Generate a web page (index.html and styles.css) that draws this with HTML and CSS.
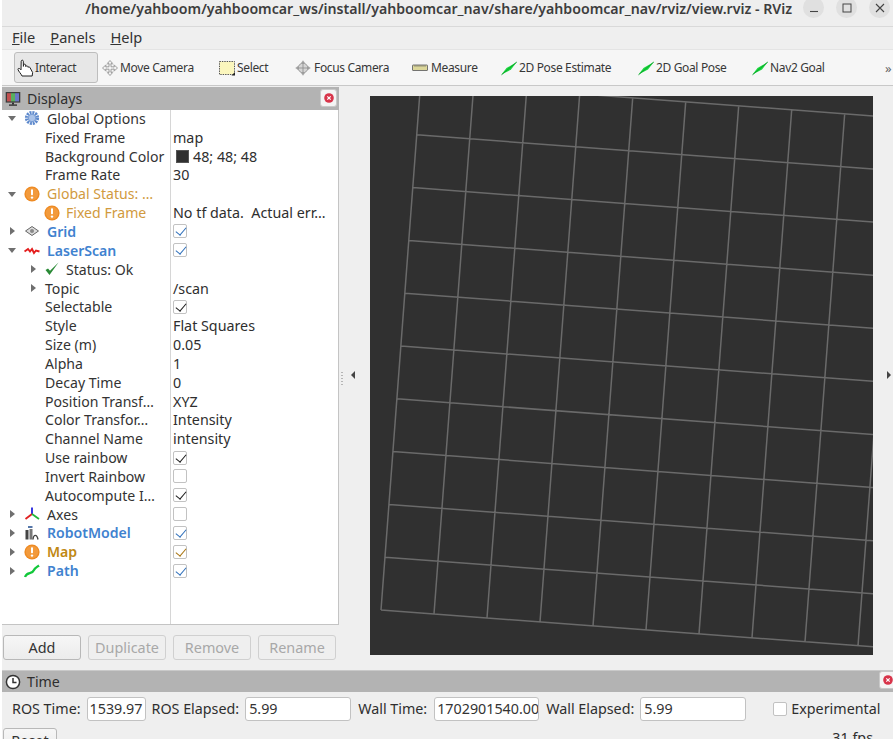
FILE: index.html
```html
<!DOCTYPE html>
<html lang="en">
<head>
<meta charset="utf-8">
<title>RViz</title>
<link rel="stylesheet" href="styles.css">
</head>
<body>
<svg class="defs" width="0" height="0" aria-hidden="true">
  <symbol id="warn" viewBox="0 0 16 16"><circle cx="8" cy="8" r="7.6" fill="#ee8a22"/><circle cx="8" cy="8" r="6.2" fill="#f29a3c"/><rect x="7" y="3.2" width="2" height="6" rx=".8" fill="#fff"/><circle cx="8" cy="11.6" r="1.2" fill="#fff"/></symbol>
  <symbol id="goal" viewBox="0 0 16 16"><path d="M.5 14.6 L5.5 8 L15.8 2 L10 9.6 Z" fill="#17d83c"/><path d="M.5 14.8 L15.8 2" stroke="#0e9f2c" stroke-width=".9"/></symbol>
</svg>
<div class="window">
  <header class="titlebar">
    <div class="title">/home/yahboom/yahboomcar_ws/install/yahboomcar_nav/share/yahboomcar_nav/rviz/view.rviz - RViz</div>
    <div class="winbtns">
      <span class="winbtn"><svg width="10" height="10" viewBox="0 0 10 10"><path d="M1 8.5H9" stroke="#444" stroke-width="1.1"/></svg></span>
      <span class="winbtn"><svg width="10" height="10" viewBox="0 0 10 10"><rect x="1" y="1" width="8" height="8" fill="none" stroke="#444" stroke-width="1"/></svg></span>
      <span class="winbtn"><svg width="10" height="10" viewBox="0 0 10 10"><path d="M1 1L9 9M9 1L1 9" stroke="#444" stroke-width="1.1"/></svg></span>
    </div>
  </header>
  <nav class="menubar">
    <span class="menu"><u>F</u>ile</span>
    <span class="menu"><u>P</u>anels</span>
    <span class="menu"><u>H</u>elp</span>
  </nav>
  <div class="toolbar">
    <span class="grip"></span>
    <div class="tool active">
      <svg class="ticon hand" viewBox="0 0 17 18"><path d="M5 17 C4 14.5 1.5 12.5 1 10.5 C.8 9 2.6 9 4 10.8 L4.2 2.2 C4.4 .8 6.1 .8 6.3 2.2 L6.4 7.4 L6.6 5.8 C7 4.9 8.2 4.9 8.6 5.8 L8.8 7.6 C9.2 6.5 10.4 6.5 10.8 7.6 L11 8.4 C11.5 7.6 12.8 7.8 13.1 8.8 L15.6 13.5 L15.2 17" fill="#fff" stroke="#222" stroke-width="1"/><path d="M5 17H15.2" stroke="#222" stroke-width="1"/></svg>
      <span>Interact</span>
    </div>
    <div class="tool move">
      <svg class="ticon" viewBox="0 0 16 16"><path d="M8 .5 L10.6 3.4 H9 V6.8 H12.4 V5.2 L15.5 8 L12.4 10.8 V9.2 H9 V12.6 H10.6 L8 15.5 L5.4 12.6 H7 V9.2 H3.6 V10.8 L.5 8 L3.6 5.2 V6.8 H7 V3.4 H5.4 Z" fill="#f3f3f3" stroke="#8a8a8a" stroke-width=".8"/><path d="M4.5 4.5h7v7h-7z" fill="none" stroke="#aaa" stroke-width=".7" stroke-dasharray="1 1"/></svg>
      <span>Move Camera</span>
    </div>
    <div class="tool select">
      <svg class="ticon" viewBox="0 0 16 16"><rect x=".5" y="1.5" width="15" height="13" fill="#fbf6bd" stroke="#555" stroke-width="1" stroke-dasharray="1.4 1"/><path d="M12.5 15.5h3.5v-3.5z" fill="#222"/></svg>
      <span>Select</span>
    </div>
    <div class="tool focus">
      <svg class="ticon" viewBox="0 0 16 16"><path d="M8 .2 L10 3 H6 Z M8 15.8 L10 13 H6 Z M.2 8 L3 6 V10 Z M15.8 8 L13 6 V10 Z" fill="#aaa"/><circle cx="8" cy="8" r="4.8" fill="#d5d5d5" stroke="#888" stroke-width=".8"/><path d="M8 2.5V13.5M2.5 8H13.5" stroke="#8a8a8a" stroke-width=".8"/></svg>
      <span>Focus Camera</span>
    </div>
    <div class="tool measure">
      <svg class="ticon" viewBox="0 0 16 16"><rect x=".5" y="5" width="15" height="5.5" rx=".5" fill="#dcd79a" stroke="#666" stroke-width=".9"/><path d="M3 5V7M5 5V7M7 5V7M9 5V7M11 5V7M13 5V7" stroke="#666" stroke-width=".6"/></svg>
      <span>Measure</span>
    </div>
    <div class="tool pose">
      <svg class="ticon"><use href="#goal"/></svg>
      <span>2D Pose Estimate</span>
    </div>
    <div class="tool gpose">
      <svg class="ticon"><use href="#goal"/></svg>
      <span>2D Goal Pose</span>
    </div>
    <div class="tool nav">
      <svg class="ticon"><use href="#goal"/></svg>
      <span>Nav2 Goal</span>
    </div>
    <span class="more">&raquo;</span>
  </div>

  <main class="main">
    <section class="dock">
      <div class="dockhead">
        <svg class="headicon" width="16" height="16" viewBox="0 0 16 16"><rect x=".7" y="1" width="14.6" height="10.6" fill="#3c3c3c"/><rect x="2" y="2.2" width="4" height="8.2" fill="#c25050"/><rect x="6" y="2.2" width="4" height="8.2" fill="#58b060"/><rect x="10" y="2.2" width="4" height="8.2" fill="#6a78c8"/><rect x="7" y="11.6" width="2" height="2" fill="#333"/><rect x="4" y="13.4" width="8" height="1.4" fill="#333"/></svg>
        <span class="headtext">Displays</span>
        <span class="closebtn"><svg width="10" height="10" viewBox="0 0 10 10"><circle cx="5" cy="5" r="4.8" fill="#d8344a"/><path d="M3.3 3.3L6.7 6.7M6.7 3.3L3.3 6.7" stroke="#fff" stroke-width="1.2"/></svg></span>
      </div>
      <div class="tree">
        <div class="row"><div class="name l0"><span class="tw open"></span><svg class="ic" viewBox="0 0 16 16"><circle cx="8" cy="8" r="5.6" fill="none" stroke="#5c88cc" stroke-width="3" stroke-dasharray="2 .9"/><circle cx="8" cy="8" r="3.8" fill="#a9c2e8" stroke="#5c88cc" stroke-width=".8"/></svg><span class="lab">Global Options</span></div><div class="val"></div></div>
        <div class="row"><div class="name p"><span class="lab">Fixed Frame</span></div><div class="val">map</div></div>
        <div class="row"><div class="name p"><span class="lab">Background Color</span></div><div class="val"><span class="swatch"></span>48; 48; 48</div></div>
        <div class="row"><div class="name p"><span class="lab">Frame Rate</span></div><div class="val">30</div></div>
        <div class="row"><div class="name l0"><span class="tw open"></span><svg class="ic"><use href="#warn"/></svg><span class="lab warn">Global Status: …</span></div><div class="val"></div></div>
        <div class="row"><div class="name l1"><span class="tw none"></span><svg class="ic"><use href="#warn"/></svg><span class="lab warn">Fixed Frame</span></div><div class="val">No tf data.&nbsp; Actual err…</div></div>
        <div class="row"><div class="name l0"><span class="tw"></span><svg class="ic" viewBox="0 0 16 16"><path d="M1.5 8 L8 3.5 L14.5 8 L8 12.5 Z" fill="#ddd" stroke="#666" stroke-width="1"/><circle cx="8" cy="8" r="2" fill="#888"/></svg><span class="lab blue">Grid</span></div><div class="val"><span class="cb blue"></span></div></div>
        <div class="row"><div class="name l0"><span class="tw open"></span><svg class="ic" viewBox="0 0 16 16"><path d="M.5 9.5 L4 7 L6 9.5 L8 7 L10 11 L12 8.5 L15.5 9.5" fill="none" stroke="#e41d1d" stroke-width="1.9"/></svg><span class="lab blue">LaserScan</span></div><div class="val"><span class="cb blue"></span></div></div>
        <div class="row"><div class="name l1"><span class="tw"></span><svg class="ic" viewBox="0 0 16 16"><path d="M1.5 9 L5.5 14 L14.5 1.5 L6 9.8 L4 7.5 Z" fill="#2a8a36"/></svg><span class="lab">Status: Ok</span></div><div class="val"></div></div>
        <div class="row"><div class="name p"><span class="tw sub"></span><span class="lab">Topic</span></div><div class="val">/scan</div></div>
        <div class="row"><div class="name p"><span class="lab">Selectable</span></div><div class="val"><span class="cb"></span></div></div>
        <div class="row"><div class="name p"><span class="lab">Style</span></div><div class="val">Flat Squares</div></div>
        <div class="row"><div class="name p"><span class="lab">Size (m)</span></div><div class="val">0.05</div></div>
        <div class="row"><div class="name p"><span class="lab">Alpha</span></div><div class="val">1</div></div>
        <div class="row"><div class="name p"><span class="lab">Decay Time</span></div><div class="val">0</div></div>
        <div class="row"><div class="name p"><span class="lab">Position Transf…</span></div><div class="val">XYZ</div></div>
        <div class="row"><div class="name p"><span class="lab">Color Transfor…</span></div><div class="val">Intensity</div></div>
        <div class="row"><div class="name p"><span class="lab">Channel Name</span></div><div class="val">intensity</div></div>
        <div class="row"><div class="name p"><span class="lab">Use rainbow</span></div><div class="val"><span class="cb"></span></div></div>
        <div class="row"><div class="name p"><span class="lab">Invert Rainbow</span></div><div class="val"><span class="cb off"></span></div></div>
        <div class="row"><div class="name p"><span class="lab">Autocompute I…</span></div><div class="val"><span class="cb"></span></div></div>
        <div class="row"><div class="name l0"><span class="tw"></span><svg class="ic" viewBox="0 0 16 16"><path d="M8 8V1.5" stroke="#2222dd" stroke-width="1.8"/><path d="M8 8L1.5 13" stroke="#e02020" stroke-width="1.8"/><path d="M8 8L15 13" stroke="#22b83a" stroke-width="1.8"/></svg><span class="lab">Axes</span></div><div class="val"><span class="cb off"></span></div></div>
        <div class="row"><div class="name l0"><span class="tw"></span><svg class="ic" viewBox="0 0 16 16"><rect x="4" y="1" width="4.5" height="2" fill="#5577aa"/><rect x="1.5" y="5" width="3" height="9.5" fill="#444"/><rect x="5.5" y="4" width="3" height="10.5" fill="#777"/><path d="M9 14.5 C9.5 9 13 9 14 14.5" fill="none" stroke="#444" stroke-width="1.4"/></svg><span class="lab blue">RobotModel</span></div><div class="val"><span class="cb blue"></span></div></div>
        <div class="row"><div class="name l0"><span class="tw"></span><svg class="ic"><use href="#warn"/></svg><span class="lab mapw">Map</span></div><div class="val"><span class="cb amber"></span></div></div>
        <div class="row"><div class="name l0"><span class="tw"></span><svg class="ic" viewBox="0 0 16 16"><path d="M1 14 C3 8 8 12 10 7 C11 5 13 4 15 2.5" fill="none" stroke="#12c83a" stroke-width="2.2"/></svg><span class="lab blue">Path</span></div><div class="val"><span class="cb blue"></span></div></div>
      </div>
      <div class="vgrip"></div>
      <div class="btnrow">
        <button class="btn">Add</button>
        <button class="btn" disabled>Duplicate</button>
        <button class="btn" disabled>Remove</button>
        <button class="btn" disabled>Rename</button>
      </div>
    </section>
    <div class="split"><span class="tri left"></span></div>
    <div class="canvas">
      <svg class="grid3d" width="503" height="559" viewBox="0 0 503 559">
        <path d="M11 514L541 553.7M14.97 461.2L544.97 500.9M18.94 408.4L548.94 448.1M22.91 355.6L552.91 395.3M26.88 302.8L556.88 342.5M30.85 250L560.85 289.7M34.82 197.2L564.82 236.9M38.79 144.4L568.79 184.1M42.76 91.6L572.76 131.3M46.73 38.8L576.73 78.5M50.7 -14L580.7 25.7M11 514L50.7 -14M64 517.97L103.7 -10.03M117 521.94L156.7 -6.06M170 525.91L209.7 -2.09M223 529.88L262.7 1.88M276 533.85L315.7 5.85M329 537.82L368.7 9.82M382 541.79L421.7 13.79M435 545.76L474.7 17.76M488 549.73L527.7 21.73M541 553.7L580.7 25.7" fill="none" stroke="#6a6a6a" stroke-width="1.5"/>
      </svg>
    </div>
    <div class="rightedge"><span class="tri right"></span></div>
  </main>
  <div class="hgrip"></div>
  <section class="time">
    <div class="timehead">
      <svg class="headicon" width="16" height="16" viewBox="0 0 16 16"><circle cx="8" cy="8" r="6.6" fill="#fff" stroke="#333" stroke-width="1.5"/><path d="M8 4V8.4H11.5" fill="none" stroke="#333" stroke-width="1.5"/></svg>
      <span class="headtext">Time</span>
      <span class="closebtn timeclose"><svg width="10" height="10" viewBox="0 0 10 10"><circle cx="5" cy="5" r="4.8" fill="#d8344a"/><path d="M3.3 3.3L6.7 6.7M6.7 3.3L3.3 6.7" stroke="#fff" stroke-width="1.2"/></svg></span>
    </div>
    <div class="timerow">
      <span class="tl">ROS Time:</span><span class="field f1">1539.97</span>
      <span class="tl">ROS Elapsed:</span><span class="field f2">5.99</span>
      <span class="tl">Wall Time:</span><span class="field f3">1702901540.00</span>
      <span class="tl">Wall Elapsed:</span><span class="field f2">5.99</span>
      <span class="cb off exp"></span><span class="tl">Experimental</span>
    </div>
    <div class="statusrow">
      <button class="btn reset">Reset</button>
      <span class="fps">31 fps</span>
    </div>
  </section>
</div>
</body>
</html>
```
FILE: styles.css
```css
* { box-sizing: border-box; }
html, body { margin: 0; padding: 0; background: #fff; }
body { width: 896px; height: 742px; overflow: hidden; font-family: "Noto Sans", sans-serif; font-size: 14.3px; color: #2e2e2e; }
.defs { display: block; height: 0; }
.window { margin-left: 2px; width: 891px; height: 739px; background: #efefef; display: flex; flex-direction: column; overflow: hidden; }

.titlebar { height: 27px; flex: none; display: flex; align-items: flex-start; border-bottom: 1px solid #d9d9d9; background: #eeeeee; }
.title { width: 801px; padding-right: 11px; text-align: right; font-weight: 600; font-size: 14.15px; line-height: 18px; color: #3d3d3d; white-space: nowrap; flex: none; }
.winbtns { display: flex; gap: 12px; margin-top: -3px; flex: none; }
.winbtn { width: 21px; height: 21px; border-radius: 50%; background: #e0e0e0; display: flex; align-items: center; justify-content: center; }

.menubar { height: 22px; flex: none; display: flex; gap: 15px; padding: 0 0 3px 10px; align-items: center; font-size: 14.6px; color: #333; }
.toolbar { height: 37px; flex: none; display: flex; align-items: center; background: #f6f6f6; border-top: 1px solid #e4e4e4; border-bottom: 1px solid #c8c8c8; font-size: 12px; letter-spacing: -0.35px; color: #383838; }
.grip { width: 4px; height: 16px; margin-left: 5px; margin-right: 3px; background-image: radial-gradient(#bbb 0.6px, transparent 0.7px); background-size: 2px 2px; }
.tool { display: flex; align-items: center; height: 31px; flex: none; white-space: nowrap; }
.tool.active { width: 84px; padding-left: 2px; background: #e7e7e7; border: 1px solid #bdbdbd; border-radius: 3px; }
.ticon { width: 16px; height: 16px; flex: none; margin-right: 2px; }
.ticon.hand { width: 17px; height: 18px; margin-right: 1px; }
.move { margin-left: 4px; width: 117px; }
.select { width: 76px; }
.focus { width: 117px; }
.focus .ticon, .measure .ticon { margin-right: 3px; }
.measure { width: 89px; }
.pose { width: 137px; }
.gpose { width: 114px; }
.nav { width: 133px; }
.more { color: #666; font-size: 13px; }

.main { height: 584px; flex: none; display: flex; padding-top: 1px; }
.dock { width: 337px; flex: none; display: flex; flex-direction: column; }
.dockhead { height: 23px; flex: none; background: #b3b3b3; display: flex; align-items: center; padding-left: 3px; position: relative; }
.headicon { flex: none; }
.headtext { margin-left: 6px; font-size: 14.2px; color: #2e2e2e; }
.closebtn { position: absolute; right: 2px; top: 2px; width: 17px; height: 18px; background: #f4f4f4; border: 1px solid #c9c9c9; border-radius: 3px; display: flex; align-items: center; justify-content: center; }
.tree { height: 515px; flex: none; background: #fff; border-right: 1px solid #c4c4c4; border-bottom: 1px solid #c4c4c4; overflow: hidden; position: relative; }
.tree::before { content: ""; position: absolute; left: 168px; top: 0; bottom: 0; width: 1px; background: #d6d6d6; }
.row { height: 18.85px; display: flex; align-items: center; font-size: 14.3px; color: #333; white-space: nowrap; }
.row:first-child { margin-top: -1px; }
.name { width: 169px; flex: none; display: flex; align-items: center; height: 100%; font-size: 14.1px; }
.val { padding-left: 2px; display: flex; align-items: center; height: 100%; color: #2e2e2e; }
.l0 { padding-left: 6px; }
.l1 { padding-left: 27px; }
.l1 .ic { margin-right: 6px; }
.p { padding-left: 43px; position: relative; }
.tw { width: 8px; height: 8px; flex: none; margin-right: 8px; position: relative; }
.l1 .tw { margin-right: 7px; }
.tw::before { content: ""; position: absolute; left: 2px; top: 0; border-left: 5px solid #6f6f6f; border-top: 4px solid transparent; border-bottom: 4px solid transparent; }
.tw.open::before { left: 0; top: 2px; border-top: 5px solid #6f6f6f; border-left: 4px solid transparent; border-right: 4px solid transparent; border-bottom: 0; }
.tw.none::before { display: none; }
.tw.sub { position: absolute; left: 27px; top: 5px; margin: 0; }
.ic { width: 16px; height: 16px; flex: none; margin-right: 7px; }
.lab { color: #333; }
.warn { color: #d19a3e; }
.mapw { color: #c08812; font-weight: 600; }
.lab.blue { color: #3f82cf; font-weight: 600; }
.swatch { width: 13px; height: 13px; background: #303030; border: 1px solid #555; margin: 0 4px 0 3px; flex: none; }

.cb { width: 14px; height: 14px; border: 1px solid #c2c2c2; background: #fff; border-radius: 2px; display: block; position: relative; flex: none; }
.cb::after { content: ""; position: absolute; left: 4px; top: 0; width: 5px; height: 9px; border: solid #1c1c1c; border-width: 0 1.7px 1.7px 0; transform: rotate(40deg); }
.cb.off::after { display: none; }
.cb.blue::after { border-color: #2f70bb; }
.cb.amber::after { border-color: #a87410; }

.vgrip { height: 10px; flex: none; position: relative; }
.vgrip::before, .hgrip::before, .split::before { content: ""; position: absolute; background-image: radial-gradient(#b5b5b5 0.6px, transparent 0.7px); background-size: 3px 2px; }
.vgrip::before { left: 161px; top: 1px; width: 16px; height: 2px; }
.btnrow { display: flex; gap: 7px; padding-left: 1px; }
.btn { width: 78px; height: 25px; font: inherit; font-size: 14.4px; color: #333; background: linear-gradient(#f6f6f6, #ececec); border: 1px solid #b8b8b8; border-radius: 3px; padding: 0; }
.btn:disabled { color: #a8a8a8; border-color: #d0d0d0; background: #efefef; }

.split { width: 31px; flex: none; position: relative; }
.split::before { left: 2px; top: 284px; width: 2px; height: 14px; background-size: 2px 3px; }
.canvas { width: 503px; height: 559px; flex: none; margin-top: 9px; background: #303030; overflow: hidden; }
.grid3d { display: block; }
.rightedge { flex: 1; position: relative; }
.tri { position: absolute; top: 284px; border-top: 4px solid transparent; border-bottom: 4px solid transparent; }
.tri.left { left: 12px; border-right: 4px solid #444; }
.tri.right { left: 14px; border-left: 4px solid #444; }

.hgrip { height: 0; flex: none; position: relative; }
.hgrip::before { left: 441px; top: -6px; width: 16px; height: 2px; }
.time { flex: 1; display: flex; flex-direction: column; min-height: 0; }
.timehead { height: 22px; flex: none; background: #b3b3b3; border-top: 1px solid #c9c9c9; display: flex; align-items: center; padding-left: 3px; position: relative; }
.timeclose { right: -3px; top: 0; }
.timerow { height: 36px; flex: none; display: flex; align-items: center; padding: 0 0 3px 10px; font-size: 14.3px; }
.tl { white-space: nowrap; }
.field { height: 24px; background: #fff; border: 1px solid #c2c2c2; border-radius: 3px; display: flex; align-items: center; padding-left: 2px; color: #333; margin: 0 6px 0 6px; flex: none; overflow: hidden; white-space: nowrap; }
.f1 { width: 59px; }
.f2 { width: 106px; padding-left: 3px; margin-right: 7px; }
.f3 { width: 105px; margin-left: 7px; margin-right: 7px; }
.exp { margin: 0 4px 0 20px; }
.statusrow { display: flex; justify-content: space-between; padding-left: 1px; padding-right: 20px; }
.reset { width: 54px; flex: none; }
.fps { font-size: 14.3px; }
```
